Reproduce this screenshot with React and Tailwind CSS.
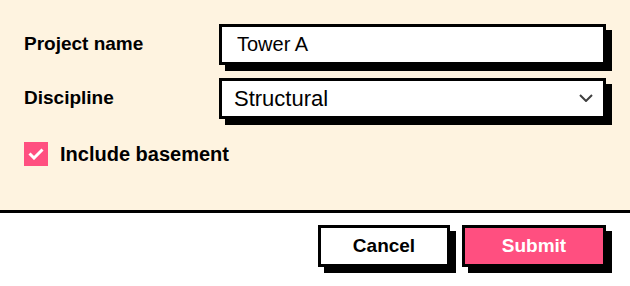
import { useState } from "react";

export default function App() {
  const [name, setName] = useState("Tower A");
  const [discipline, setDiscipline] = useState("Structural");
  const [basement, setBasement] = useState(true);

  return (
    <div className="w-[630px] h-[286px] flex flex-col bg-white font-['Liberation_Sans',Arial,sans-serif] text-black">
      <div className="h-[210px] bg-[#fef3e0] px-6 pt-6 flex flex-col">
        <div className="flex items-center h-[41px]">
          <label className="w-[195px] text-[19px] font-bold">Project name</label>
          <input
            value={name}
            onChange={(e) => setName(e.target.value)}
            className="w-[387px] h-[41px] border-[3px] border-black bg-white px-[15px] text-[20px] outline-none shadow-[6px_6px_0_0_#000]"
          />
        </div>

        <div className="flex items-center h-[41px] mt-[13px]">
          <label className="w-[195px] text-[19px] font-bold">Discipline</label>
          <div className="relative w-[387px] h-[41px]">
            <select
              value={discipline}
              onChange={(e) => setDiscipline(e.target.value)}
              className="appearance-none w-full h-full border-[3px] border-black bg-white pl-3 pr-10 text-[22px] outline-none shadow-[6px_6px_0_0_#000]"
            >
              <option>Structural</option>
              <option>Architectural</option>
              <option>MEP</option>
            </select>
            <svg
              className="absolute right-[13px] top-[16px] pointer-events-none"
              width="14"
              height="8"
              viewBox="0 0 14 8"
              fill="none"
            >
              <path d="M1 1l6 6 6-6" stroke="#3f3f3f" strokeWidth="2" />
            </svg>
          </div>
        </div>

        <label className="flex items-center gap-3 mt-[20px] cursor-pointer">
          <span
            onClick={() => setBasement(!basement)}
            className={basement ? "w-6 h-6 bg-[#ff4f80] flex items-center justify-center" : "w-6 h-6 bg-white border-2 border-black"}
          >
            {basement && (
              <svg width="16" height="12" viewBox="0 0 16 12" fill="none">
                <path d="M1.5 5.5l4.5 4.5 8.5-8.5" stroke="#fff" strokeWidth="3" />
              </svg>
            )}
          </span>
          <span className="text-[20px] font-bold">Include basement</span>
        </label>
      </div>

      <div className="h-[3px] bg-black" />

      <div className="flex justify-end gap-3 pr-6 pt-3">
        <button className="w-[132px] h-[42px] border-[3px] border-black bg-white text-[19px] font-bold shadow-[6px_6px_0_0_#000]">
          Cancel
        </button>
        <button className="w-[144px] h-[42px] border-[3px] border-black bg-[#ff4f80] text-white text-[19px] font-bold shadow-[6px_6px_0_0_#000]">
          Submit
        </button>
      </div>
    </div>
  );
}
